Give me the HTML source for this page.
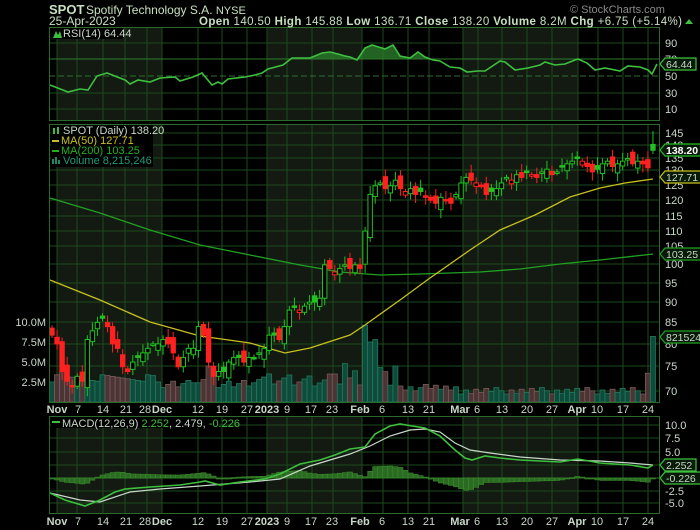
<!DOCTYPE html>
<html><head><meta charset="utf-8"><style>
html,body{margin:0;padding:0;background:#000;width:700px;height:530px;overflow:hidden}
svg{display:block}
text{font-family:"Liberation Sans",sans-serif}
</style></head><body>
<svg id="s" width="700" height="530" xmlns="http://www.w3.org/2000/svg"></svg>
<script>
var S=[];
function add(x){S.push(x);}
var L=49,R=659;
var P=[[27,120],[124,402],[416,513]];
var shade=[[57,162],[267,362],[463,578]];
P.forEach(function(p){
 add('<rect x="'+L+'" y="'+p[0]+'" width="'+(R-L)+'" height="'+(p[1]-p[0])+'" fill="#000"/>');
 shade.forEach(function(s){add('<rect x="'+s[0]+'" y="'+p[0]+'" width="'+(s[1]-s[0])+'" height="'+(p[1]-p[0])+'" fill="#121a12"/>');});
});
var vx=[57,77,103,125,147,162,198,222,247,267,287,312,333,362,383,408,429,463,478,502,527,552,578,598,623,648];
var hgrid=[[43,59,93,109],[133,145,158,170,185,200,216,231,246,264,283,302,322,344,366,391],[425,438,452,465,491,503]];
P.forEach(function(p,k){
 vx.forEach(function(x){add('<line x1="'+x+'" y1="'+p[0]+'" x2="'+x+'" y2="'+p[1]+'" stroke="#1d4a1d" stroke-width="1"/>');});
 hgrid[k].forEach(function(y){add('<line x1="'+L+'" y1="'+y+'" x2="'+R+'" y2="'+y+'" stroke="#1d4a1d" stroke-width="1"/>');});
});
add('<line x1="'+L+'" y1="76" x2="'+R+'" y2="76" stroke="#2e6e2e" stroke-dasharray="6,3"/>');
add('<line x1="'+L+'" y1="59" x2="'+R+'" y2="59" stroke="#2e7a2e"/>');
add('<line x1="'+L+'" y1="478" x2="'+R+'" y2="478" stroke="#2e6e2e"/>');
var rsi=[[50,85],[68,92],[80,89],[88,90],[97,76],[107,73],[125,80],[130,84],[138,80],[150,82],[160,78],[175,77],[180,81],[193,77],[202,73],[212,85],[218,82],[222,84],[228,79],[245,77],[255,75],[262,73],[268,69],[283,65],[292,58],[310,58],[322,53],[330,52],[338,54],[345,56],[350,57],[357,60],[365,48],[372,45],[385,49],[393,45],[400,56],[410,58],[418,52],[425,57],[433,60],[440,61],[450,67],[460,68],[467,72],[478,71],[485,71],[500,61],[505,62],[515,70],[528,68],[540,65],[545,62],[555,65],[565,64],[575,60],[578,59],[587,63],[595,70],[605,68],[620,71],[628,66],[640,67],[648,70],[652,74],[657,64]];
var fill='';rsi.forEach(function(p){fill+=p[0]+','+Math.min(p[1],59)+' ';});
add('<polygon points="'+fill+'" fill="#2a7a2a" opacity="0.8"/>');
add('<polyline points="'+rsi.map(function(p){return p.join(',')}).join(' ')+'" fill="none" stroke="#3ec03e" stroke-width="1.6"/>');
var C=[82,80,74,72,71,73,72,81,83,85,86,84,80,79,75,74,76,77,78,79,80,
80,81,80,78,75,77,79,79,84,82,76,73,74,74,76,77,77,76,77,77,78,
79,82,82,81,84,88,89,88,89,90,90,91,100,99,98,99,100,99,100,99,
110,122,125,126,124,125,127,124,123,124,122,123,121,120,119,121,120,119,122,
126,128,127,126,125,122,123,124,126,128,127,129,128,130,129,128,130,131,129,130,132,133,134,
135,134,132,130,131,133,134,132,133,134,135,133,134,133,131.5,138.2];
function py(p){return 1896-354.2*Math.log(p);}
function X(i){return 52+i*5.05;}
for(var i=0;i<C.length;i++){
 var v;
 if(i<21)v=2.6+((i*53)%9)/10;else if(i<42)v=1.8+((i*37)%11)/10;else if(i<62)v=2+((i*29)%13)/8;else if(i<81)v=1.4+((i*31)%9)/10;else v=1+((i*23)%9)/10;
 var ov={0:2.5,2:3.8,3:3.2,28:2.4,31:4.5,32:3.4,55:3.5,58:4.8,60:3.9,62:9.6,63:7.5,64:7.8,65:4.3,66:3.8,68:4.5,118:3.6,119:8.2};
 if(ov[i]!==undefined)v=ov[i];
 if(i>=90&&i<118)v=Math.min(v,2.0);
 var up=i==0||C[i]>=C[i-1];
 var h=v*8;
 add('<rect x="'+(X(i)-2.5)+'" y="'+(402-h)+'" width="5" height="'+h+'" fill="'+(up?'#0f4a3a':'#4a3434')+'" stroke="'+(up?'#1f7a5e':'#7a5858')+'" stroke-width="0.8"/>');
}
var ma200=[[50,198],[100,213],[150,230],[200,245],[250,255],[300,265],[340,272],[380,275],[420,274],[480,272],[520,269],[560,264],[600,260],[653,254]];
var ma50=[[50,280],[100,300],[150,322],[200,336],[250,343],[285,353],[310,348],[350,335],[365,325],[400,300],[430,278],[470,250],[500,230],[535,215],[570,197],[600,188],[625,183],[653,179]];
add('<polyline points="'+ma200.join(' ')+'" fill="none" stroke="#22a022" stroke-width="1.3"/>');
add('<polyline points="'+ma50.join(' ')+'" fill="none" stroke="#c8c020" stroke-width="1.3"/>');
for(var i=0;i<C.length;i++){
 var c=C[i],o=(i==0?c*1.02:C[i-1]*(1+(((i*37)%7)-3)*0.006));
 if(i==119)o=140.5;
 var hi=Math.max(o,c)*(1.008+((i*13)%5)*0.004),lo=Math.min(o,c)*(0.992-((i*17)%5)*0.004);
 if(i==119){hi=145.88;lo=136.71;}
 var up=i==0?false:c>=C[i-1];
 var col=up?'#22c022':'#ff2020';
 var x=X(i);
 add('<line x1="'+x+'" y1="'+py(hi)+'" x2="'+x+'" y2="'+py(lo)+'" stroke="'+col+'" stroke-width="1"/>');
 var t=py(Math.max(o,c)),b=py(Math.min(o,c));if(b-t<1.5)b=t+1.5;
 var hollow=c>o;
 add('<rect x="'+(x-2.2)+'" y="'+t+'" width="4.4" height="'+(b-t)+'" fill="'+(hollow?'#000':col)+'" stroke="'+col+'" stroke-width="1"/>');
}
var macd=[[50,493],[65,500],[85,506],[100,500],[115,492],[125,489],[150,487],[180,485],[200,482],[205,481],[220,485],[240,482],[265,479],[280,474],[300,464],[320,460],[335,455],[350,449],[365,447],[375,434],[390,426],[400,424],[412,426],[425,428],[440,436],[455,450],[465,458],[472,460],[485,456],[500,458],[520,460],[560,462],[578,459],[600,463],[630,465],[648,468],[653,465]];
var sig=[[50,493],[80,500],[100,502],[130,492],[160,489],[200,486],[250,482],[280,479],[310,466],[350,454],[370,446],[390,436],[410,430],[425,429],[440,432],[455,443],[470,450],[490,453],[520,457],[560,460],[600,461],[630,463],[653,465]];
function interp(a,x){for(var k=1;k<a.length;k++){if(x<=a[k][0]){var t=(x-a[k-1][0])/(a[k][0]-a[k-1][0]);return a[k-1][1]+t*(a[k][1]-a[k-1][1]);}}return a[a.length-1][1];}
for(var i=0;i<C.length;i++){var x=X(i);var d=interp(sig,x)-interp(macd,x);var h=d*1.2;
 add('<rect x="'+(x-2.5)+'" y="'+(h>0?478-h:478)+'" width="5" height="'+Math.max(Math.abs(h),1)+'" fill="#2a6a22" stroke="#3a8a2a" stroke-width="0.6"/>');}
add('<polyline points="'+sig.join(' ')+'" fill="none" stroke="#c8d8c8" stroke-width="1.2"/>');
add('<polyline points="'+macd.join(' ')+'" fill="none" stroke="#3ec03e" stroke-width="1.6"/>');
P.forEach(function(p){add('<rect x="'+L+'.5" y="'+p[0]+'.5" width="'+(R-L)+'" height="'+(p[1]-p[0])+'" fill="none" stroke="#2a6a2a"/>');});
function rl(y,t){add('<text x="665" y="'+(y+4)+'" fill="#c8d8c8" font-size="11">'+t+'</text>');}
[[43,'90'],[59,'70'],[76,'50'],[93,'30'],[109,'10']].forEach(function(a){rl(a[0],a[1]);});
[[133,'145'],[145,'140'],[158,'135'],[170,'130'],[185,'125'],[200,'120'],[216,'115'],[231,'110'],[246,'105'],[264,'100'],[283,'95'],[302,'90'],[322,'85'],[344,'80'],[366,'75'],[391,'70']].forEach(function(a){rl(a[0],a[1]);});
[[425,'10.0'],[438,'7.5'],[452,'5.0'],[491,'-2.5'],[503,'-5.0']].forEach(function(a){rl(a[0],a[1]);});
[[322,'10.0M'],[342,'7.5M'],[362,'5.0M'],[382,'2.5M']].forEach(function(a){add('<text x="46" y="'+(a[0]+4)+'" fill="#c8d8c8" font-size="11" text-anchor="end">'+a[1]+'</text>');});
function tag(y,t,bc,tc,bold,w){w=w||31;add('<path d="M660,'+y+' l5,-6 h'+w+' v12 h-'+w+' z" fill="#0a1a0a" stroke="'+bc+'" stroke-width="1.2"/><text x="666" y="'+(y+4)+'" fill="'+tc+'" font-size="10.5"'+(bold?' font-weight="bold"':'')+'>'+t+'</text>');}
tag(64,'64.44','#3ec03e','#c8d8c8');
tag(150,'138.20','#22c022','#ffffff',true,37);
tag(177,'127.71','#c8c020','#c8d8c8',false,37);
tag(254,'103.25','#22a022','#c8d8c8',false,37);
tag(337,'8215246','#22a022','#c8d8c8',false,45);
tag(465,'2.252','#3ec03e','#c8d8c8');
tag(478,'-0.226','#3ec03e','#c8d8c8',false,36);
var dl=[[57,'Nov',1],[78,'7'],[103,'14'],[126,'21'],[145,'28'],[162,'Dec',1],[198,'12'],[222,'19'],[247,'27'],[267,'2023',1],[287,'9'],[311,'17'],[332,'23'],[360,'Feb',1],[382,'6'],[408,'13'],[429,'21'],[460,'Mar',1],[477,'6'],[502,'13'],[527,'20'],[552,'27'],[577,'Apr',1],[597,'10'],[623,'17'],[648,'24']];
[413,525].forEach(function(y){dl.forEach(function(d){add('<text x="'+d[0]+'" y="'+y+'" fill="#c8d8c8" font-size="11"'+(d[2]?' font-weight="bold"':'')+' text-anchor="middle">'+d[1]+'</text>');});});
add('<rect x="51" y="28" width="72" height="11" fill="#000"/><path d="M53,38 l3,-7 l2,4 l2,-4 l2,7z" fill="#3ec03e"/><text x="63" y="37" fill="#c8d8c8" font-size="11">RSI(14) 64.44</text>');
add('<rect x="51" y="125" width="102" height="42" fill="#000"/>');
add('<text x="63" y="134" fill="#c8d8c8" font-size="11">SPOT (Daily) 138.20</text><rect x="53" y="128" width="2" height="6" fill="#3ec03e"/><rect x="57" y="127" width="2" height="7" fill="#3ec03e"/>');
add('<rect x="52" y="140" width="7" height="2" fill="#c8c020"/><text x="61" y="144" fill="#c8c020" font-size="11">MA(50) 127.71</text>');
add('<rect x="52" y="150" width="7" height="2" fill="#22b022"/><text x="61" y="154" fill="#22b022" font-size="11">MA(200) 103.25</text>');
add('<path d="M52,164 v-5 h2 v5 m1,0 v-7 h2 v7 m1,0 v-4 h2 v4" fill="#1f8a6a"/><text x="63" y="164" fill="#1f9a78" font-size="11">Volume 8,215,246</text>');
add('<rect x="51" y="417" width="168" height="11" fill="#000"/><rect x="52" y="421" width="8" height="2" fill="#3ec03e"/><text x="62" y="427" fill="#c8d8c8" font-size="11">MACD(12,26,9) <tspan fill="#3ec03e">2.252</tspan>, 2.479, <tspan fill="#3ec03e">-0.226</tspan></text>');
add('<text x="49" y="14" fill="#c8e0c0" font-size="13" font-weight="bold">SPOT</text><text x="86" y="14" fill="#c8e0c0" font-size="12">Spotify Technology S.A. <tspan font-size="11">NYSE</tspan></text>');
add('<text x="49" y="25" fill="#c8e0c0" font-size="12">25-Apr-2023</text>');
add('<text x="570" y="13" fill="#8a8a8a" font-size="11">© StockCharts.com</text>');
add('<text x="199" y="25" fill="#c8e0c0" font-size="11.5" textLength="483" lengthAdjust="spacing"><tspan font-weight="bold">Open</tspan> 140.50 <tspan font-weight="bold">High</tspan> 145.88 <tspan font-weight="bold">Low</tspan> 136.71 <tspan font-weight="bold">Close</tspan> 138.20 <tspan font-weight="bold">Volume</tspan> 8.2M <tspan font-weight="bold">Chg</tspan> +6.75 (+5.14%)</text><path d="M685,24 l4,-5 l4,5z" fill="#3ec03e"/>');
document.getElementById('s').innerHTML=S.join('');
</script>
</body></html>
